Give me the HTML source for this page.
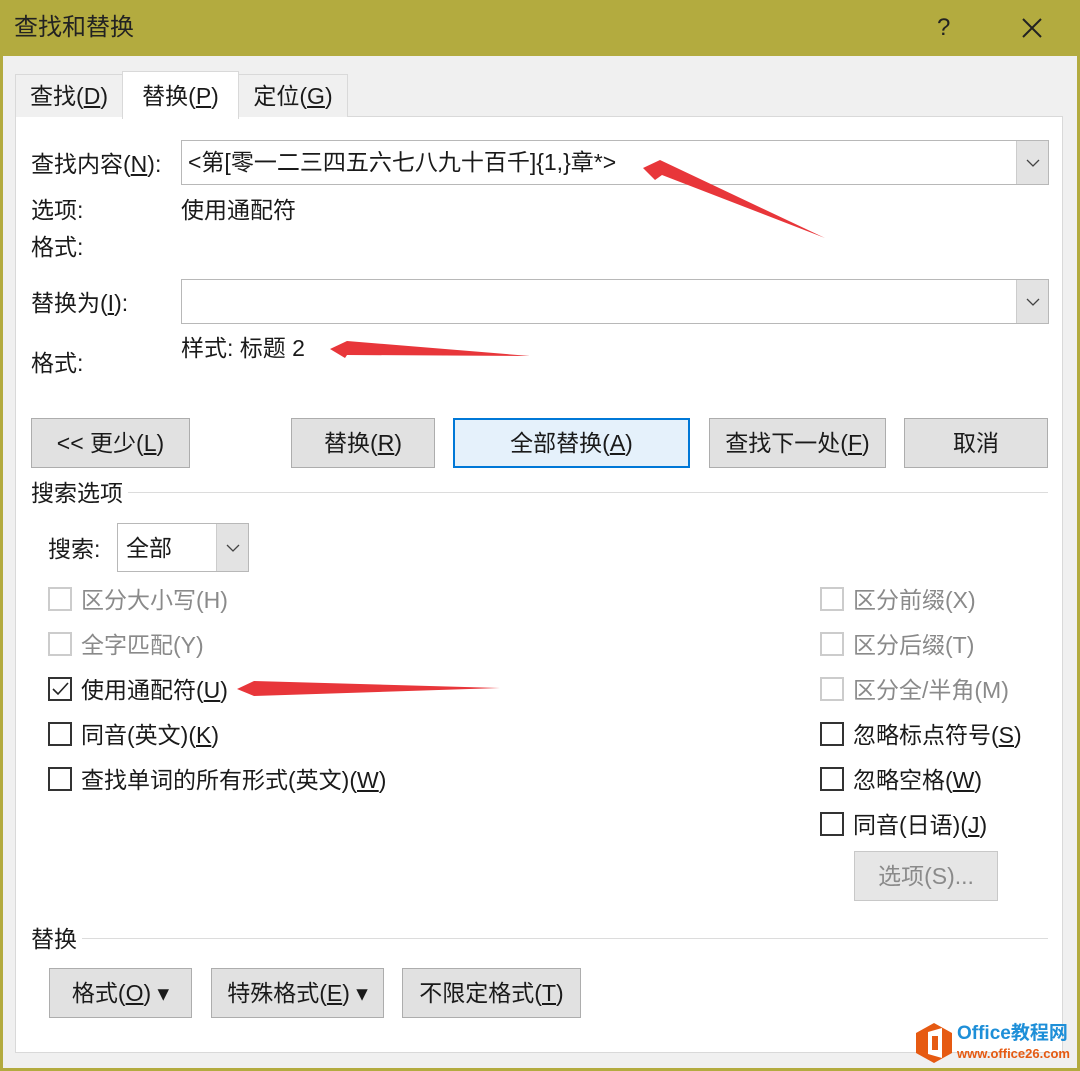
<!DOCTYPE html>
<html><head><meta charset="utf-8"><style>
*{margin:0;padding:0;box-sizing:border-box}
body{width:1080px;height:1071px;background:#b3ab3f;position:relative;overflow:hidden;font-family:"Liberation Sans","Noto Sans CJK SC",sans-serif;font-size:23px;color:#1a1a1a}
.a{position:absolute;white-space:nowrap;line-height:30px}
.win{position:absolute;left:3px;top:56px;width:1074px;height:1012px;background:#f0f0f0}
.panel{position:absolute;left:15px;top:116px;width:1048px;height:937px;background:#fff;border:1px solid #d9d9d9}
.tab{position:absolute;top:74px;height:43px;background:#f0f0f0;border:1px solid #d9d9d9;border-bottom:none;line-height:42px;text-align:center}
.btn{position:absolute;height:50px;background:#e1e1e1;border:1px solid #adadad;text-align:center;line-height:48px}
.inp{position:absolute;background:#fff;border:1px solid #b8b8b8}
.dd{position:absolute;right:0;top:0;bottom:0;width:32px;background:#e3e3e3;border-left:1px solid #ccc}
.dd svg{position:absolute;left:9px;top:50%;margin-top:-5px}
.cb{position:absolute;width:24px;height:24px;border:2px solid #333;background:#fff}
.cb.d{border-color:#ccc}
.g{color:#8a8a8a}
u{text-decoration:underline}
.line{position:absolute;height:1px;background:#dcdcdc}
</style></head><body>
<div class="a" style="left:14px;top:13px;font-size:24px;color:#222">查找和替换</div>
<div class="a" style="left:937px;top:13px;font-size:24px;color:#222">?</div>
<svg class="a" style="left:1021px;top:17px" width="22" height="22"><path d="M2 2L20 20M20 2L2 20" stroke="#222" stroke-width="2"/></svg>
<div class="win"></div>
<div class="panel"></div>
<div class="tab" style="left:15px;width:108px">查找(<u>D</u>)</div>
<div class="tab" style="left:238px;width:110px">定位(<u>G</u>)</div>
<div class="tab" style="left:122px;width:117px;top:71px;height:48px;background:#fff;line-height:48px">替换(<u>P</u>)</div>

<div class="a" style="left:31px;top:149px">查找内容(<u>N</u>):</div>
<div class="inp" style="left:181px;top:140px;width:868px;height:45px"><div class="a" style="left:6px;top:6px">&lt;第[零一二三四五六七八九十百千]{1,}章*&gt;</div><div class="dd"><svg width="14" height="10"><path d="M1 2L7 8L13 2" stroke="#444" fill="none" stroke-width="1.3"/></svg></div></div>
<div class="a" style="left:31px;top:195px">选项:</div>
<div class="a" style="left:181px;top:195px">使用通配符</div>
<div class="a" style="left:31px;top:232px">格式:</div>

<div class="a" style="left:31px;top:288px">替换为(<u>I</u>):</div>
<div class="inp" style="left:181px;top:279px;width:868px;height:45px"><div class="dd"><svg width="14" height="10"><path d="M1 2L7 8L13 2" stroke="#444" fill="none" stroke-width="1.3"/></svg></div></div>
<div class="a" style="left:31px;top:348px">格式:</div>
<div class="a" style="left:181px;top:333px">样式: 标题 2</div>

<div class="btn" style="left:31px;top:418px;width:159px">&lt;&lt; 更少(<u>L</u>)</div>
<div class="btn" style="left:291px;top:418px;width:144px">替换(<u>R</u>)</div>
<div class="btn" style="left:453px;top:418px;width:237px;background:#e5f1fb;border:2px solid #0078d7;line-height:46px">全部替换(<u>A</u>)</div>
<div class="btn" style="left:709px;top:418px;width:177px">查找下一处(<u>F</u>)</div>
<div class="btn" style="left:904px;top:418px;width:144px">取消</div>

<div class="a" style="left:31px;top:478px">搜索选项</div>
<div class="line" style="left:128px;top:492px;width:920px"></div>
<div class="a" style="left:48px;top:534px">搜索:</div>
<div class="inp" style="left:117px;top:523px;width:132px;height:49px"><div class="a" style="left:8px;top:9px">全部</div><div class="dd"><svg width="14" height="10"><path d="M1 2L7 8L13 2" stroke="#444" fill="none" stroke-width="1.3"/></svg></div></div>

<div class="cb d" style="left:48px;top:587px"></div><div class="a g" style="left:81px;top:585px">区分大小写(H)</div>
<div class="cb d" style="left:48px;top:632px"></div><div class="a g" style="left:81px;top:630px">全字匹配(Y)</div>
<div class="cb" style="left:48px;top:677px"><svg width="20" height="20" style="position:absolute;left:0;top:0"><path d="M3 10L8 15L18 4" stroke="#222" fill="none" stroke-width="1.6"/></svg></div><div class="a" style="left:81px;top:675px">使用通配符(<u>U</u>)</div>
<div class="cb" style="left:48px;top:722px"></div><div class="a" style="left:81px;top:720px">同音(英文)(<u>K</u>)</div>
<div class="cb" style="left:48px;top:767px"></div><div class="a" style="left:81px;top:765px">查找单词的所有形式(英文)(<u>W</u>)</div>

<div class="cb d" style="left:820px;top:587px"></div><div class="a g" style="left:853px;top:585px">区分前缀(X)</div>
<div class="cb d" style="left:820px;top:632px"></div><div class="a g" style="left:853px;top:630px">区分后缀(T)</div>
<div class="cb d" style="left:820px;top:677px"></div><div class="a g" style="left:853px;top:675px">区分全/半角(M)</div>
<div class="cb" style="left:820px;top:722px"></div><div class="a" style="left:853px;top:720px">忽略标点符号(<u>S</u>)</div>
<div class="cb" style="left:820px;top:767px"></div><div class="a" style="left:853px;top:765px">忽略空格(<u>W</u>)</div>
<div class="cb" style="left:820px;top:812px"></div><div class="a" style="left:853px;top:810px">同音(日语)(<u>J</u>)</div>
<div class="btn g" style="left:854px;top:851px;width:144px;background:#e6e6e6;border-color:#c8c8c8">选项(S)...</div>

<div class="a" style="left:31px;top:924px">替换</div>
<div class="line" style="left:82px;top:938px;width:966px"></div>
<div class="btn" style="left:49px;top:968px;width:143px">格式(<u>O</u>) ▾</div>
<div class="btn" style="left:211px;top:968px;width:173px">特殊格式(<u>E</u>) ▾</div>
<div class="btn" style="left:402px;top:968px;width:179px">不限定格式(<u>T</u>)</div>

<svg class="a" style="left:0;top:0" width="1080" height="1071">
<polygon points="643,168 660,160 825,238 662,175 655,180" fill="#e8363a"/>
<polygon points="330,349 347,341 530,356 347,355 345,358" fill="#e8363a"/>
<polygon points="237,689 254,681 500,688 254,696" fill="#e8363a"/>
<polygon points="934,1023 952,1033 952,1053 934,1063 916,1053 916,1033" fill="#e65a12"/>
<path d="M928 1032L942 1028V1058L928 1054Z" fill="#fff"/><rect x="932" y="1036" width="6" height="14" fill="#e65a12"/>
</svg>
<div class="a" style="left:957px;top:1022px;font-size:19px;font-weight:bold;color:#1e8fd8;line-height:24px">Office教程网</div>
<div class="a" style="left:957px;top:1046px;font-size:13px;font-weight:bold;color:#e65a12;line-height:16px">www.office26.com</div>
</body></html>
